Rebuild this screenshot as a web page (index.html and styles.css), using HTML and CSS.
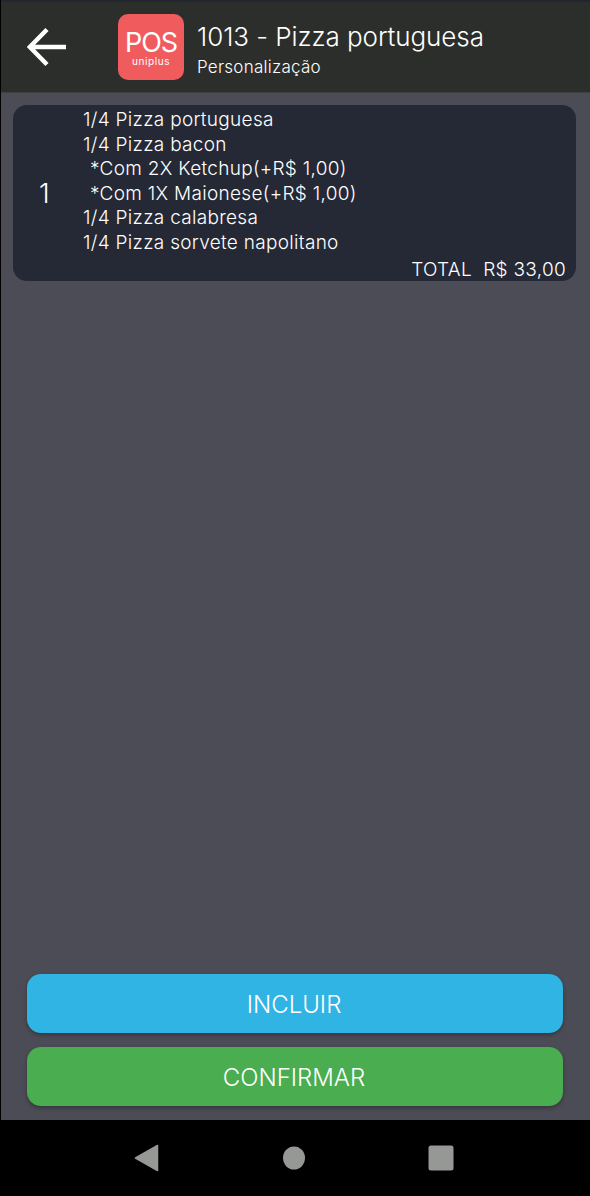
FILE: index.html
```html
<!DOCTYPE html>
<html lang="pt">
<head>
<meta charset="utf-8">
<title>Personalização</title>
<link rel="stylesheet" href="styles.css">
</head>
<body>
<div class="app">
  <header class="header">
    <svg class="back" width="40" height="40" viewBox="0 0 40 40" aria-hidden="true"><path d="M39 20H3M20 2.500 2.800 20 20 37.500" fill="none" stroke="#fff" stroke-width="4.500"/></svg>
    <div class="logo"><span class="logo-pos">POS</span><span class="logo-sub">uniplus</span></div>
    <div class="titles">
      <div class="title">1013 - Pizza portuguesa</div>
      <div class="subtitle">Personalização</div>
    </div>
  </header>
  <main class="content">
    <section class="card">
      <div class="qty">1</div>
      <div class="details">
        <div class="line">1/4 Pizza portuguesa</div>
        <div class="line">1/4 Pizza bacon</div>
        <div class="line extra">*Com 2X Ketchup(+R$ 1,00)</div>
        <div class="line extra">*Com 1X Maionese(+R$ 1,00)</div>
        <div class="line">1/4 Pizza calabresa</div>
        <div class="line">1/4 Pizza sorvete napolitano</div>
        <div class="total">TOTAL&nbsp; R$ 33,00</div>
      </div>
    </section>
    <div class="actions">
      <button class="btn btn-blue"><span class="btn-label">INCLUIR</span></button>
      <button class="btn btn-green"><span class="btn-label">CONFIRMAR</span></button>
    </div>
  </main>
  <nav class="nav">
    <svg width="26" height="28" viewBox="0 0 26 28" aria-hidden="true"><path d="M23.500 1.500V26.500L1.500 14Z" fill="#969895" stroke="#969895" stroke-width="1.500" stroke-linejoin="round"/></svg>
    <svg width="24" height="24" viewBox="0 0 24 24" aria-hidden="true"><ellipse cx="12" cy="12" rx="11" ry="11.500" fill="#969895"/></svg>
    <svg width="26" height="26" viewBox="0 0 26 26" aria-hidden="true"><rect x="0.500" y="0.500" width="25" height="25" rx="2.500" fill="#969895"/></svg>
  </nav>
</div>
</body>
</html>
```
FILE: styles.css
```css
* { box-sizing: border-box; }
html, body { margin: 0; padding: 0; background: #000; }
body { font-family: Inter, "Liberation Sans", sans-serif; color: #fff; }
.app { width: 590px; height: 1196px; display: flex; flex-direction: column; overflow: hidden; }
.header { height: 93px; flex: none; display: flex; align-items: center; padding: 0 0 0 27px; background: #2c2e2b; border-top: 2px solid #23252f; border-bottom: 1px solid #3f413f; margin-left: 1px; }
.back { flex: none; margin-left: -1px; margin-top: -1px; }
.logo { width: 66px; height: 66px; margin-left: 51px; margin-top: -1px; flex: none; border-radius: 10px; background: #f05c5e; display: flex; flex-direction: column; align-items: center; }
.logo-pos { font-size: 27px; font-weight: 400; line-height: 20px; margin-top: 19px; letter-spacing: -1px; }
.logo-sub { font-size: 10px; line-height: 10px; margin-top: 3px; letter-spacing: 0.6px; }
.titles { margin-left: 13px; display: flex; flex-direction: column; padding-top: 4px; }
.title { font-size: 26px; font-weight: 300; line-height: 30px; letter-spacing: -0.07px; }
.subtitle { font-size: 17px; font-weight: 300; line-height: 20px; margin-top: 5px; letter-spacing: 0.25px; }
.content { flex: 1; margin-left: 1px; background: #4b4c55; display: flex; flex-direction: column; justify-content: space-between; padding: 12px 14px 14px 12px; }
.card { height: 176px; background: #252936; border-radius: 14px; display: flex; position: relative; }
.qty { width: 70px; flex: none; display: flex; align-items: center; padding: 0 0 0 26px; font-size: 27px; font-weight: 300; }
.details { flex: 1; padding-top: 3px; font-size: 19px; font-weight: 300; letter-spacing: 0.3px; }
.line { height: 24.500px; line-height: 24.500px; }
.extra { padding-left: 7px; }
.total { text-align: right; padding-right: 10px; line-height: 24px; margin-top: 3px; }
.actions { display: flex; flex-direction: column; gap: 14px; padding: 0 0 0 14px; }
.btn { height: 59px; width: 536px; border: 0; border-radius: 14px; color: #fff; font: 300 24px Inter, "Liberation Sans", sans-serif; box-shadow: 0 2px 4px rgba(0,0,0,.3); padding: 2px 2px 0 0; }
.btn-label { display: block; }
.btn-blue { background: #30b4e4; }
.btn-green { background: #4aad50; }
.nav { height: 76px; flex: none; background: #000; display: flex; align-items: center; justify-content: space-between; padding: 0 136px 0 134px; }
```
